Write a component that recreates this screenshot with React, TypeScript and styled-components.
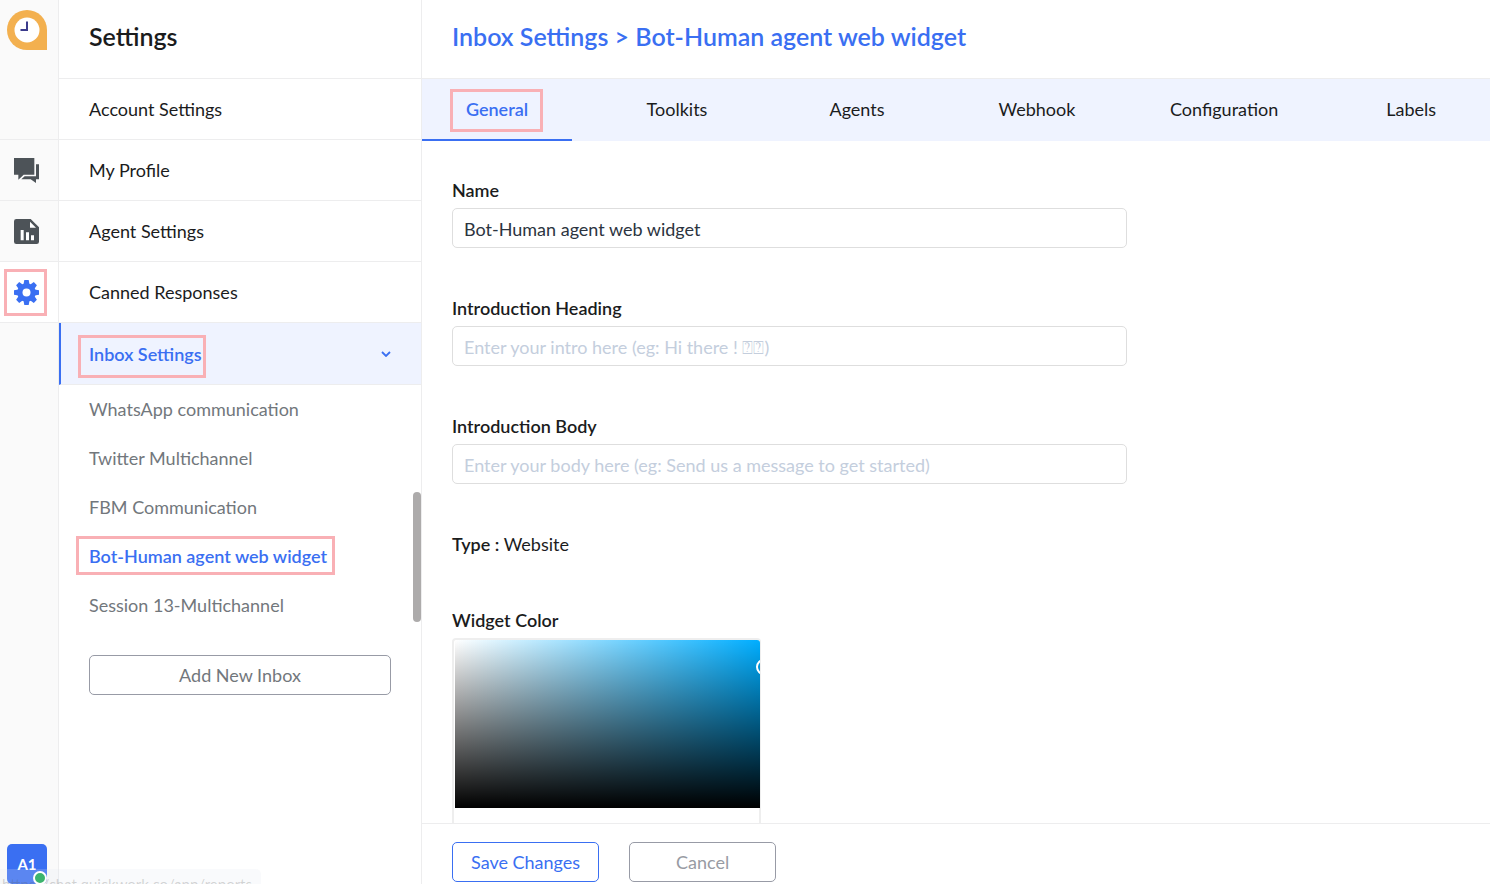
import React from 'react';
import styled, { createGlobalStyle, css } from 'styled-components';

const BLUE = '#3a6ff2';
const LINE = '#ededee';

const GlobalStyle = createGlobalStyle`
  *, *::before, *::after { box-sizing: border-box; }
  body {
    margin: 0;
    background: #fff;
    color: #1b1c1d;
    font-family: Lato, "Liberation Sans", sans-serif;
    font-size: 18px;
    line-height: 24px;
  }
  button, input { font: inherit; }
  h1, h2, ul { margin: 0; padding: 0; }
  li { list-style: none; }
  a { color: inherit; text-decoration: none; }
`;

const Shell = styled.div`
  position: relative;
  display: flex;
  height: 100vh;
  overflow: hidden;
`;

const Rail = styled.nav`
  flex: none;
  display: flex;
  flex-direction: column;
  width: 59px;
  background: #fafafa;
  border-right: 1px solid ${LINE};
`;

const RailHeader = styled.div`
  height: 140px;
  padding: 10px 7px;
  border-bottom: 1px solid ${LINE};
`;

const RailItem = styled.a<{ $active?: boolean }>`
  display: flex;
  align-items: center;
  height: 61px;
  padding-left: 14px;
  border-bottom: 1px solid ${LINE};
  background: ${(p) => (p.$active ? '#fff' : 'transparent')};
  svg { display: block; }
`;

const Avatar = styled.button`
  position: relative;
  width: 40px;
  height: 40px;
  margin: auto 7px 0;
  padding: 0;
  border: 0;
  border-radius: 5px;
  background: ${BLUE};
  color: #fff;
  font-size: 15px;
  font-weight: 700;
`;

const Presence = styled.span`
  position: absolute;
  z-index: 2;
  right: 0;
  bottom: -1px;
  width: 14px;
  height: 14px;
  border: 2px solid #fff;
  border-radius: 50%;
  background: #3cb46e;
`;

const Marked = styled.span<{ $inset: string }>`
  position: relative;
  display: inline-block;
  &::after {
    content: '';
    position: absolute;
    inset: ${(p) => p.$inset};
    border: 3px solid #f9b0b5;
    pointer-events: none;
  }
`;

const Sidebar = styled.aside`
  position: relative;
  flex: none;
  width: 363px;
  border-right: 1px solid ${LINE};
`;

const Header = styled.header`
  height: 79px;
  padding: 20px 30px 0;
  border-bottom: 1px solid ${LINE};
`;

const Title = styled.h1<{ $accent?: boolean }>`
  font-size: 25px;
  line-height: 32px;
  font-weight: 600;
  color: ${(p) => (p.$accent ? BLUE : '#1b1c1d')};
`;

const MenuItem = styled.a<{ $active?: boolean }>`
  display: flex;
  align-items: center;
  justify-content: space-between;
  height: 61px;
  padding: 0 30px;
  border-bottom: 1px solid ${LINE};
  ${(p) =>
    p.$active &&
    css`
      height: 62px;
      padding-left: 28px;
      border-left: 2px solid ${BLUE};
      background: #eff3ff;
      color: ${BLUE};
      font-weight: 600;
    `}
`;

const InboxList = styled.ul`
  padding: 0 30px;
`;

const InboxItem = styled.li<{ $active?: boolean }>`
  padding: 12px 0 13px;
  color: ${(p) => (p.$active ? BLUE : '#72777c')};
  font-weight: ${(p) => (p.$active ? 600 : 400)};
`;

const Button = styled.button<{ $tone?: 'primary' | 'muted' }>`
  height: 40px;
  padding: 0 18px;
  border: 1px solid ${(p) => (p.$tone === 'primary' ? BLUE : '#989ba6')};
  border-radius: 5px;
  background: #fff;
  color: ${(p) =>
    p.$tone === 'primary' ? BLUE : p.$tone === 'muted' ? '#989ba3' : '#72777c'};
`;

const AddInbox = styled(Button)`
  display: block;
  width: calc(100% - 60px);
  margin: 25px 30px 0;
`;

const ScrollThumb = styled.div`
  position: absolute;
  right: 0;
  top: 492px;
  width: 8px;
  height: 130px;
  border-radius: 4px;
  background: #adabab;
`;

const Main = styled.main`
  flex: 1;
  min-width: 0;
  display: flex;
  flex-direction: column;
`;

const Tabs = styled.nav`
  flex: none;
  display: flex;
  gap: 30px;
  height: 62px;
  background: #eff3ff;
  overflow: hidden;
`;

const Tab = styled.a<{ $active?: boolean }>`
  flex: none;
  min-width: 150px;
  padding: 18px 28px 0;
  text-align: center;
  ${(p) =>
    p.$active &&
    css`
      border-bottom: 2px solid ${BLUE};
      color: ${BLUE};
      font-weight: 600;
    `}
`;

const Form = styled.form`
  flex: 1;
  min-height: 0;
  padding: 37px 0 0 30px;
  overflow: hidden;
`;

const Field = styled.div`
  margin-bottom: 48px;
`;

const Label = styled.label`
  display: block;
  margin-bottom: 6px;
  font-weight: 600;
`;

const Input = styled.input`
  display: block;
  width: 65%;
  height: 40px;
  padding: 2px 11px 0;
  border: 1px solid #dedede;
  border-radius: 5px;
  background: #fff;
  color: #2c3440;
  &::placeholder { color: #c4cedd; opacity: 1; }
`;

const TypeLine = styled.p`
  margin: 0 0 52px;
  b { font-weight: 600; }
`;

const Picker = styled.div`
  width: 309px;
  height: 240px;
  padding: 2px 1px 0 3px;
  border-radius: 4px;
  box-shadow: inset 0 0 0 2px #eeeeee;
`;

const Shade = styled.div`
  position: relative;
  height: 168px;
  border-radius: 3px 3px 0 0;
  overflow: hidden;
  background:
    linear-gradient(to top, #000, rgba(0, 0, 0, 0)),
    linear-gradient(to right, #fff, rgba(255, 255, 255, 0)),
    #00aeff;
`;

const ShadeHandle = styled.span`
  position: absolute;
  top: 19px;
  right: -12px;
  width: 16px;
  height: 16px;
  border: 2px solid #fff;
  border-radius: 50%;
`;

const Footer = styled.footer`
  flex: none;
  display: flex;
  gap: 30px;
  height: 61px;
  padding: 18px 30px 0;
  border-top: 1px solid ${LINE};
  button { min-width: 147px; }
`;

const LinkStatus = styled.div`
  position: absolute;
  left: 0;
  bottom: -13px;
  height: 28px;
  padding: 3px 9px 0 2px;
  border-radius: 0 5px 0 0;
  background: rgba(225, 228, 238, 0.2);
  color: rgba(90, 90, 90, 0.25);
  font-size: 15px;
  pointer-events: none;
`;

const Logo = () => (
  <svg width="40" height="40" viewBox="0 0 40 40" aria-label="Home">
    <path d="M20 0a20 20 0 0 1 20 20v20H20a20 20 0 0 1 0-40z" fill="#f3b04f" />
    <circle cx="20" cy="20" r="12.5" fill="#fff" />
    <path d="M20 11.5V20h-6.5" fill="none" stroke="#3b3b8c" strokeWidth="2" />
  </svg>
);

const ChatIcon = () => (
  <svg width="25" height="25" viewBox="0 0 75 75" fill="#4d5358">
    <path d="M0 0h61v50H29L13 65V50H0z" />
    <path d="M66 19h9v45h-9v11L50 64H22l10-9h34z" />
  </svg>
);

const ReportIcon = () => (
  <svg width="25" height="25" viewBox="0 0 75 75">
    <path d="M7 0h43l25 25v43a7 7 0 0 1-7 7H7a7 7 0 0 1-7-7V7a7 7 0 0 1 7-7z" fill="#4d5358" />
    <path d="M48 8v18h18zM20 33h9v31h-9zM36 40h9v24h-9zM51 49h9v15h-9z" fill="#fff" />
  </svg>
);

const GearIcon = () => (
  <svg width="25" height="25" viewBox="-12.5 -12.5 25 25" fill={BLUE}>
    {[0, 45, 90, 135].map((a) => (
      <path key={a} d="M-2.2 -12.5h4.4l.8 4.5v16l-.8 4.5h-4.4l-.8-4.5v-16z" transform={`rotate(${a})`} />
    ))}
    <circle r="9.3" />
    <circle r="4" fill="#fff" />
  </svg>
);

const Chevron = () => (
  <svg width="10" height="6" viewBox="0 0 10 6" fill="none" stroke={BLUE} strokeWidth="1.8">
    <path d="M1 1l4 4 4-4" />
  </svg>
);

const menu = ['Account Settings', 'My Profile', 'Agent Settings', 'Canned Responses'];
const inboxes = [
  'WhatsApp communication',
  'Twitter Multichannel',
  'FBM Communication',
  'Bot-Human agent web widget',
  'Session 13-Multichannel',
];
const tabs = ['General', 'Toolkits', 'Agents', 'Webhook', 'Configuration', 'Labels'];

export default function App() {
  return (
    <>
      <GlobalStyle />
      <Shell>
        <Rail>
          <RailHeader><Logo /></RailHeader>
          <RailItem href="#chats" aria-label="Chats"><ChatIcon /></RailItem>
          <RailItem href="#reports" aria-label="Reports"><ReportIcon /></RailItem>
          <RailItem href="#settings" aria-label="Settings" $active>
            <Marked $inset="-11px -8px -11px -10px"><GearIcon /></Marked>
          </RailItem>
          <Avatar type="button">A1<Presence /></Avatar>
        </Rail>
        <Sidebar>
          <Header><Title>Settings</Title></Header>
          {menu.map((m) => <MenuItem key={m} href="#menu">{m}</MenuItem>)}
          <MenuItem href="#inbox" $active>
            <Marked $inset="-7px -4px -12px -11px">Inbox Settings</Marked>
            <Chevron />
          </MenuItem>
          <InboxList>
            {inboxes.map((name) => {
              const active = name.startsWith('Bot');
              return (
                <InboxItem key={name} $active={active}>
                  <a href="#inbox">
                    {active ? <Marked $inset="-8px -8px -7px -13px">{name}</Marked> : name}
                  </a>
                </InboxItem>
              );
            })}
          </InboxList>
          <AddInbox type="button">Add New Inbox</AddInbox>
          <ScrollThumb />
        </Sidebar>
        <Main>
          <Header><Title as="h2" $accent>Inbox Settings &gt; Bot-Human agent web widget</Title></Header>
          <Tabs>
            {tabs.map((t, i) => (
              <Tab key={t} href="#tab" $active={i === 0}>
                {i === 0 ? <Marked $inset="-8px -15px -11px -16px">{t}</Marked> : t}
              </Tab>
            ))}
          </Tabs>
          <Form id="inbox-form">
            <Field>
              <Label htmlFor="name">Name</Label>
              <Input id="name" defaultValue="Bot-Human agent web widget" />
            </Field>
            <Field>
              <Label htmlFor="heading">Introduction Heading</Label>
              <Input id="heading" placeholder={'Enter your intro here (eg: Hi there ! \u2370\u2370)'} />
            </Field>
            <Field>
              <Label htmlFor="body">Introduction Body</Label>
              <Input id="body" placeholder="Enter your body here (eg: Send us a message to get started)" />
            </Field>
            <TypeLine><b>Type :</b> Website</TypeLine>
            <Label as="div">Widget Color</Label>
            <Picker><Shade><ShadeHandle /></Shade></Picker>
          </Form>
          <Footer>
            <Button type="submit" form="inbox-form" $tone="primary">Save Changes</Button>
            <Button type="button" $tone="muted">Cancel</Button>
          </Footer>
        </Main>
        <LinkStatus>https://chat.quickwork.co/app/reports</LinkStatus>
      </Shell>
    </>
  );
}
